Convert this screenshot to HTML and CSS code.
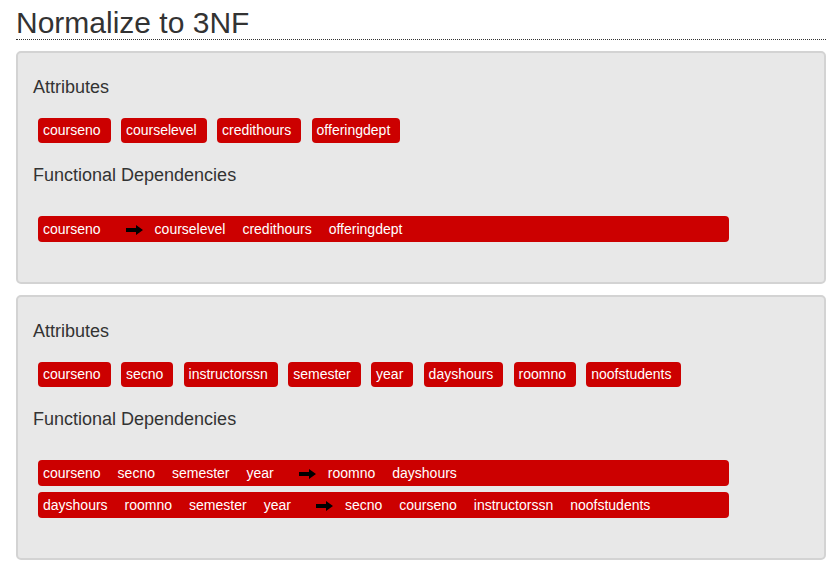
FILE: index.html
```html
<!DOCTYPE html>
<html>
<head>
<meta charset="utf-8">
<title>Normalize to 3NF</title>
<link rel="stylesheet" href="styles.css">
</head>
<body>
<div class="page">
  <h1 class="title">Normalize to 3NF</h1>

  <section class="panel">
    <h2 class="section-head">Attributes</h2>
    <div class="chips">
      <span class="chip">courseno</span>
      <span class="chip">courselevel</span>
      <span class="chip">credithours</span>
      <span class="chip">offeringdept</span>
    </div>
    <h2 class="section-head fd-head">Functional Dependencies</h2>
    <div class="fds">
      <div class="fd">
        <div class="side"><span>courseno</span></div>
        <svg class="arrow" width="17" height="10" viewBox="0 0 17 10"><polygon points="0,3 10,3 10,0 17,5 10,10 10,7 0,7" fill="#000"/></svg>
        <div class="side"><span>courselevel</span><span>credithours</span><span>offeringdept</span></div>
      </div>
    </div>
  </section>

  <section class="panel">
    <h2 class="section-head">Attributes</h2>
    <div class="chips">
      <span class="chip">courseno</span>
      <span class="chip">secno</span>
      <span class="chip">instructorssn</span>
      <span class="chip">semester</span>
      <span class="chip">year</span>
      <span class="chip">dayshours</span>
      <span class="chip">roomno</span>
      <span class="chip">noofstudents</span>
    </div>
    <h2 class="section-head fd-head">Functional Dependencies</h2>
    <div class="fds">
      <div class="fd">
        <div class="side"><span>courseno</span><span>secno</span><span>semester</span><span>year</span></div>
        <svg class="arrow" width="17" height="10" viewBox="0 0 17 10"><polygon points="0,3 10,3 10,0 17,5 10,10 10,7 0,7" fill="#000"/></svg>
        <div class="side"><span>roomno</span><span>dayshours</span></div>
      </div>
      <div class="fd">
        <div class="side"><span>dayshours</span><span>roomno</span><span>semester</span><span>year</span></div>
        <svg class="arrow" width="17" height="10" viewBox="0 0 17 10"><polygon points="0,3 10,3 10,0 17,5 10,10 10,7 0,7" fill="#000"/></svg>
        <div class="side"><span>secno</span><span>courseno</span><span>instructorssn</span><span>noofstudents</span></div>
      </div>
    </div>
  </section>
</div>
</body>
</html>
```

FILE: styles.css
```css
html, body {
  margin: 0;
  padding: 0;
  background: #fff;
}

body {
  font-family: "Liberation Sans", Arial, Helvetica, sans-serif;
  color: #333;
}

.page {
  padding: 6px 10px 0 16px;
}

.title {
  margin: 0 0 11px 0;
  font-size: 30px;
  font-weight: normal;
  line-height: 33px;
  color: #333;
  border-bottom: 1px dotted #333;
}

.panel {
  background: #e8e8e8;
  border: 2px solid #d3d3d3;
  border-radius: 5px;
  padding: 22px 15px 40px 15px;
  margin-bottom: 11px;
}

.section-head {
  margin: 0;
  font-size: 18px;
  font-weight: normal;
  line-height: 24px;
  color: #333;
}

.chips {
  display: flex;
  flex-wrap: wrap;
  gap: 10.3px;
  margin: 19px 0 0 5px;
}

.chip {
  background: #cc0000;
  color: #fff;
  font-size: 14px;
  line-height: 17px;
  padding: 4px 10px 4px 5px;
  border-radius: 4px;
}

.fd-head {
  margin-top: 20px;
}

.fds {
  display: flex;
  flex-direction: column;
  gap: 6px;
  margin: 29px 0 0 5px;
}

.fd {
  width: 691px;
  box-sizing: border-box;
  background: #cc0000;
  color: #fff;
  font-size: 14px;
  line-height: 18px;
  padding: 4px 5px;
  border-radius: 4px;
  display: flex;
  align-items: center;
}

.side {
  display: flex;
  gap: 17px;
}

.arrow {
  display: block;
  margin: 2px 12px 0 25px;
}
```
